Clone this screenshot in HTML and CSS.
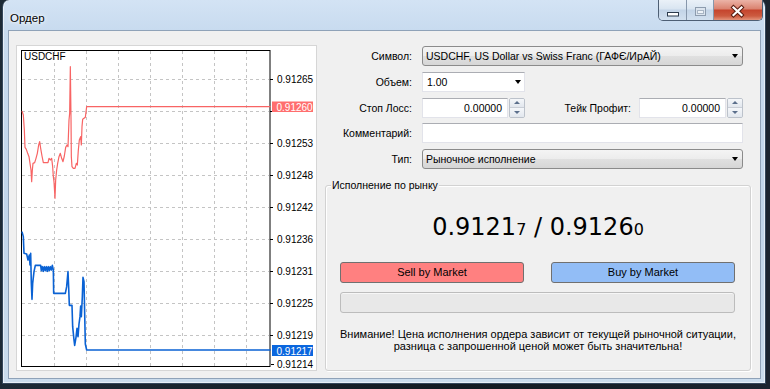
FILE: index.html
```html
<!DOCTYPE html>
<html lang="ru">
<head>
<meta charset="utf-8">
<title>Ордер</title>
<link rel="stylesheet" href="styles.css">
</head>
<body>
<div class="window">
  <div class="titlebar">
    <span class="title">Ордер</span>
    <div class="caption">
      <div class="cap-btn cap-min"><svg width="27" height="20" viewBox="0 0 27 20"><rect x="8.5" y="12.5" width="11" height="3.5" fill="#fff" stroke="#2b3a4c"/></svg></div>
      <div class="cap-btn cap-max"><svg width="26" height="20" viewBox="0 0 26 20"><rect x="8.5" y="7.5" width="10" height="8" fill="#dbe4ee" stroke="#8d9cae"/><rect x="10.5" y="10.5" width="6" height="3" fill="#eef3f8" stroke="#a9b6c5"/></svg></div>
      <div class="cap-btn cap-close"><svg width="48" height="20" viewBox="0 0 48 20"><path d="M19.5 7.5l8 7.5M27.5 7.5l-8 7.5" stroke="#5a1c10" stroke-width="4.2" stroke-linecap="square"/><path d="M19.5 7.5l8 7.5M27.5 7.5l-8 7.5" stroke="#fff" stroke-width="2.2" stroke-linecap="square"/></svg></div>
    </div>
  </div>
  <div class="frame-body">
    <div class="client">
      <div class="chart">
        <svg width="299" height="324" viewBox="17 46 299 324">
          <rect x="17" y="46" width="299" height="324" fill="#fff"/>
          <g stroke="#c4c4c4" stroke-width="1" stroke-dasharray="3 3" fill="none">
            <path d="M54.5 51V366M86.5 51V366M118.5 51V366M150.5 51V366M182.5 51V366M214.5 51V366M246.5 51V366"/>
            <path d="M22 79.5H269M22 111.5H269M22 143.5H269M22 175.5H269M22 207.5H269M22 239.5H269M22 271.5H269M22 303.5H269M22 335.5H269"/>
          </g>
          <path d="M270 79.5h3M270 111.5h3M270 143.5h3M270 175.5h3M270 207.5h3M270 239.5h3M270 271.5h3M270 303.5h3M270 335.5h3M271 364.5h3" stroke="#000" stroke-width="1"/>
          <rect x="21.5" y="50.5" width="248.5" height="316" fill="none" stroke="#000" stroke-width="1"/>
          <text x="24" y="60" class="ctext">USDCHF</text>
          <g transform="translate(0 30) scale(0.33333)">
            <polyline fill="none" stroke="#f86464" stroke-width="3.6" stroke-linejoin="round" points="66,243 70,255 73,300 75,352 79,358 83,370 87,380 90,400 93,420 95,455 97,420 99,400 104,398 108,385 112,370 116,345 119,335 122,355 126,378 130,398 144,398 147,385 151,390 155,385 158,410 160,440 162,455 165,505 167,450 170,420 173,400 177,380 181,370 185,385 189,395 193,378 197,352 201,345 204,350 207,270 209,250 211,110 213,260 214,380 216,410 220,415 225,415 229,400 232,405 235,360 238,330 242,320 244,345 246,290 248,268 252,265 256,262 260,230 812,230"/>
          </g>
          <g transform="translate(0 200) scale(0.33333)">
            <polyline fill="none" stroke="#0a62d4" stroke-width="4.8" stroke-linejoin="round" points="66,95 70,110 72,160 80,162 84,180 88,165 90,195 92,160 94,250 96,298 98,250 102,215 106,196 122,196 124,212 127,200 130,214 133,200 136,212 139,200 142,214 145,200 148,212 151,200 154,210 157,196 160,210 161,280 196,280 200,260 204,215 206,262 208,316 216,316 218,380 222,420 224,436 228,412 231,385 234,410 237,372 240,350 242,318 244,350 247,290 249,232 252,245 254,340 256,432 260,450 812,450"/>
          </g>
          <g class="ptext">
            <text x="277" y="83">0.91265</text>
            <text x="277" y="147">0.91253</text>
            <text x="277" y="179">0.91248</text>
            <text x="277" y="211">0.91242</text>
            <text x="277" y="243">0.91236</text>
            <text x="277" y="275">0.91231</text>
            <text x="277" y="307">0.91225</text>
            <text x="277" y="339">0.91219</text>
            <text x="277" y="368">0.91214</text>
          </g>
          <rect x="272" y="101.5" width="41" height="10.5" fill="#ff6e6e"/>
          <text x="276.5" y="110.5" class="ptext light">0.91260</text>
          <rect x="272" y="345" width="41" height="11" fill="#0a66de"/>
          <text x="276.5" y="354.5" class="ptext light">0.91217</text>
        </svg>
      </div>
      <div class="panel">
        <div class="form">
          <span class="lbl">Символ:</span>
          <div class="combo"><span class="txt">USDCHF, US Dollar vs Swiss Franc (ГАФЄ/ИрАЙ)</span><span class="arrow"></span></div>

          <span class="lbl">Объем:</span>
          <div class="volume"><span class="txt">1.00</span><span class="arrow"></span></div>

          <span class="lbl">Стоп Лосс:</span>
          <div class="sltp">
            <div class="spin spin-sl">
              <div class="textbox num">0.00000</div>
              <div class="spinner"><span class="sp-up"><i></i></span><span class="sp-down"><i></i></span></div>
            </div>
            <span class="tp-label">Тейк Профит:</span>
            <div class="spin spin-tp">
              <div class="textbox num">0.00000</div>
              <div class="spinner"><span class="sp-up"><i></i></span><span class="sp-down"><i></i></span></div>
            </div>
          </div>

          <span class="lbl">Комментарий:</span>
          <div class="textbox"></div>

          <span class="lbl">Тип:</span>
          <div class="combo"><span class="txt">Рыночное исполнение</span><span class="arrow"></span></div>
        </div>

        <div class="group">
          <span class="group-title">Исполнение по рынку</span>
          <div class="price">0.9121<small>7</small> / 0.9126<small>0</small></div>
          <div class="trade">
            <div class="btn sell">Sell by Market</div>
            <div class="btn buy">Buy by Market</div>
          </div>
          <div class="bar"></div>
          <p class="warn">Внимание! Цена исполнения ордера зависит от текущей рыночной ситуации,<br>разница с запрошенной ценой может быть значительна!</p>
        </div>
      </div>
    </div>
  </div>
</div>
</body>
</html>
```

FILE: styles.css
```css
* { box-sizing: border-box; }

body {
  margin: 0;
  width: 770px;
  height: 389px;
  overflow: hidden;
  background: linear-gradient(90deg, #1d2a36 0%, #121a22 60%, #1b2430 100%);
  font-family: "Liberation Sans", Arial, sans-serif;
  font-size: 10.5px;
  color: #000;
}

.window {
  margin-left: 2px;
  width: 764px;
  height: 384px;
  border: 1px solid #34475c;
  border-top: none;
  border-radius: 7px 7px 0 0;
  background: linear-gradient(180deg, #d3e3f4 0px, #c8dbef 30px, #c1d5ea 220px, #cadced 384px);
  box-shadow: inset 1px 0 0 rgba(255, 255, 255, 0.55), inset -1px -1px 0 rgba(255, 255, 255, 0.55);
  display: flex;
  flex-direction: column;
}

.titlebar {
  height: 30px;
  flex: none;
  display: flex;
  align-items: flex-start;
  padding: 0 2px 0 7px;
}

.title {
  margin-top: 11px;
  font-size: 11.5px;
  line-height: 14px;
  text-shadow: 0 0 6px #fff, 0 0 3px #fff;
}

.caption {
  margin-left: auto;
  display: flex;
  height: 21px;
  border: 1px solid #4e5f74;
  border-top: none;
  border-radius: 0 0 5px 5px;
  overflow: hidden;
}

.cap-btn svg { display: block; }

.cap-min, .cap-max {
  background: linear-gradient(180deg, #eaf1f8 0%, #d9e5f1 45%, #c3d4e7 50%, #d2e0ef 100%);
  border-right: 1px solid #8797ab;
}

.cap-min { width: 28px; }
.cap-max { width: 27px; }

.cap-close {
  width: 48px;
  background: linear-gradient(180deg, #ebb3a7 0%, #da826f 45%, #c5442d 50%, #cc5b40 80%, #e3937b 100%);
}

.frame-body {
  flex: 1;
  display: flex;
  padding: 0 4px 4px 5px;
}

.client {
  flex: 1;
  display: flex;
  align-items: flex-start;
  gap: 8px;
  padding: 14px 9px 0 7px;
  background: #f0f0f0;
  border: 1px solid #8fa2b8;
}

.chart {
  flex: none;
  width: 301px;
  height: 326px;
  border: 1px solid #d6d6d6;
  background: #fff;
}

.chart svg { display: block; }

.ctext {
  font-family: "Liberation Sans", Arial, sans-serif;
  font-size: 10px;
  fill: #000;
}

.ptext {
  font-family: "Liberation Sans", Arial, sans-serif;
  font-size: 10px;
  fill: #000;
}

.ptext.light { fill: #fff; }

.panel {
  flex: none;
  width: 426px;
  padding-top: 1px;
  display: flex;
  flex-direction: column;
}

.form {
  display: grid;
  grid-template-columns: 87px 321px;
  column-gap: 10px;
  row-gap: 5.75px;
  align-items: center;
}

.lbl {
  text-align: right;
  white-space: nowrap;
}

.combo {
  height: 20px;
  display: flex;
  align-items: center;
  padding: 0 4px 0 3px;
  border: 1px solid #8b8b8b;
  border-radius: 3px;
  background: linear-gradient(180deg, #f4f4f4 0%, #ececec 50%, #e0e0e0 51%, #d6d6d6 100%);
}

.txt {
  flex: 1;
  white-space: nowrap;
}

.arrow {
  width: 0;
  height: 0;
  border-left: 3.5px solid transparent;
  border-right: 3.5px solid transparent;
  border-top: 4px solid #000;
}

.volume {
  width: 103px;
  height: 20px;
  display: flex;
  align-items: center;
  padding: 0 3px 0 4px;
  background: #fff;
  border: 1px solid #e2e3ea;
  border-top-color: #abadb3;
}

.textbox {
  height: 20px;
  background: #fff;
  border: 1px solid #e2e3ea;
  border-top-color: #abadb3;
  line-height: 18px;
  padding: 0 3px;
}

.sltp {
  display: flex;
  align-items: center;
}

.spin {
  display: flex;
  height: 20px;
}

.spin-sl { width: 103px; }
.spin-tp { width: 104px; }

.spin .textbox {
  flex: 1;
  text-align: right;
  padding-right: 5px;
}

.spinner {
  width: 16px;
  margin-left: 1px;
  display: flex;
  flex-direction: column;
  border: 1px solid #bcc2cb;
  border-radius: 2px;
  overflow: hidden;
}

.sp-up, .sp-down {
  flex: 1;
  display: flex;
  align-items: center;
  justify-content: center;
  background: linear-gradient(180deg, #f5f7fa, #e2e7ee);
}

.sp-up { border-bottom: 1px solid #c9ced6; }

.sp-up i, .sp-down i {
  width: 0;
  height: 0;
  border-left: 3px solid transparent;
  border-right: 3px solid transparent;
}

.sp-up i { border-bottom: 3px solid #5b6f8c; }
.sp-down i { border-top: 3px solid #5b6f8c; }

.tp-label {
  flex: 1;
  text-align: right;
  padding-right: 8px;
  white-space: nowrap;
}

.group {
  margin-top: 16px;
  height: 186px;
  border: 1px solid #d2d2d2;
  border-radius: 3px;
  box-shadow: inset 1px 1px 0 #fff, 1px 1px 0 #fff;
  display: flex;
  flex-direction: column;
}

.group-title {
  align-self: flex-start;
  margin: -7px 0 0 5px;
  padding: 0 1px;
  background: #f0f0f0;
  line-height: 13px;
}

.price {
  margin-top: 21px;
  text-align: center;
  font-family: "DejaVu Sans", sans-serif;
  font-size: 24px;
  line-height: 28px;
}

.price small { font-size: 16px; }

.trade {
  display: flex;
  justify-content: space-between;
  margin: 18px 15px 0 14px;
}

.btn {
  width: 184px;
  height: 21px;
  border: 1px solid #707070;
  border-radius: 3px;
  text-align: center;
  line-height: 19px;
  font-size: 11px;
}

.sell { background: #ff8080; }
.buy { background: #92bdf6; }

.bar {
  margin: 9px 15px 0 14px;
  height: 21px;
  border: 1px solid #bcbcbc;
  border-radius: 3px;
  background: #e8e8e8;
  box-shadow: inset 0 1px 0 #f6f6f6;
}

.warn {
  margin: 15px 0 0;
  text-align: center;
  line-height: 12px;
  font-size: 11px;
}
```
